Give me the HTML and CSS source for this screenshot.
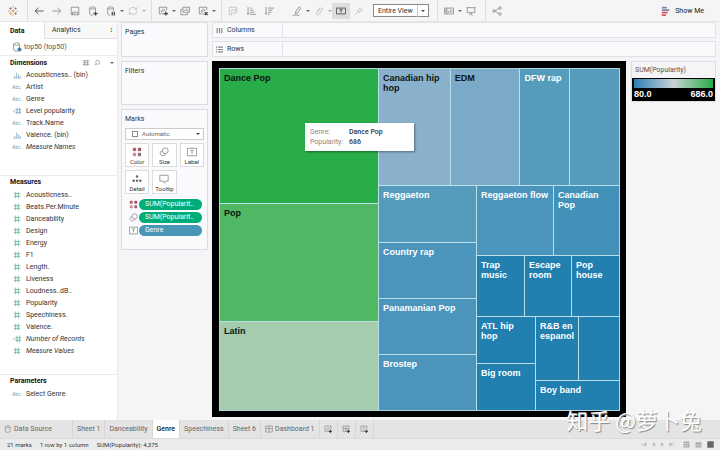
FILE: index.html
```html
<!DOCTYPE html>
<html lang="en">
<head>
    <meta charset="UTF-8">
    <meta name="viewport" content="width=device-width, initial-scale=1.0">
    <title>Genre</title>
    <link rel="stylesheet" href="styles.css">
</head>
<body>
    <!-- Shared icons -->
    <svg class="icon-defs" aria-hidden="true">
        <symbol id="i-num" viewBox="0 0 12 12"><path d="M4 1v10M8 1v10M1 4h10M1 8h10"/></symbol>
        <symbol id="i-numcalc" viewBox="0 0 12 12"><path d="M6 1v10M10 1v10M3.500 4H12M3.500 8H12M0 6h3"/></symbol>
        <symbol id="i-bin" viewBox="0 0 12 12"><path d="M2.500 10V7M5.500 10V2.500M8.500 10V5M11 10V8M1 10.500h11"/></symbol>
        <symbol id="i-dots" viewBox="0 0 12 12"><g stroke="none"><rect x="1" y="1" width="4" height="4" rx="1" fill="#b5606a"/><rect x="7" y="1" width="4" height="4" rx="1" fill="#a05a62"/><rect x="1" y="7" width="4" height="4" rx="1" fill="#cf8a8f"/><rect x="7" y="7" width="4" height="4" rx="1" fill="#8d6f7d"/></g></symbol>
        <symbol id="i-size" viewBox="0 0 12 12"><circle cx="7.500" cy="4.500" r="3.500"/><path d="M4 4.500A3 3 0 1 0 6 10c1 0 2-1 2-2"/></symbol>
        <symbol id="i-label" viewBox="0 0 12 12"><path d="M.5 1.500h11v9H.5zM4 4h4M6 4v4.500"/></symbol>
        <symbol id="i-sheet" viewBox="0 0 12 12"><path d="M10.500 6V1.500h-9v8H7M4 7.500V6M6 7.500V3.500M8 6V5"/><path d="M9.500 7v5M7 9.500h5" stroke="#333" stroke-width="1.500"/></symbol>
        <symbol id="i-grid" viewBox="0 0 12 12"><path d="M1 1.500h10v9H1zM1 5.500h10M6 1.500v9"/></symbol>
        <symbol id="i-gridadd" viewBox="0 0 12 12"><path d="M10.500 6V1.500h-9v8H7M1.500 5.500h9M6 1.500v8"/><path d="M9.500 7v5M7 9.500h5" stroke="#333" stroke-width="1.500"/></symbol>
        <symbol id="i-bookadd" viewBox="0 0 12 12"><path d="M10.500 6V1.500H7L6 2.500 5 1.500H1.500v8H5L6 10.500M6 2.500v8"/><path d="M9.500 7v5M7 9.500h5" stroke="#333" stroke-width="1.500"/></symbol>
        <symbol id="i-db" viewBox="0 0 12 12"><path d="M2 2.500v7c0 2 7 2 7 0v-7M2 2.500c0-2 7-2 7 0s-7 2-7 0"/></symbol>
    </svg>

    <header class="toolbar">
        <button class="tool" aria-label="Start page"><svg viewBox="0 0 12 12"><path stroke="#d98a4c" d="M6 4v4M4 6h4"/><path stroke="#b4626e" d="M3 1.500v3M1.500 3h3M9 7.500v3M7.500 9h3"/><path stroke="#7f8fb0" d="M9 1.500v3M7.500 3h3M6 0v2M0 6h2"/><path stroke="#c9a24d" d="M3 7.500v3M1.500 9h3M6 10v2M10 6h2"/></svg></button>
        <span class="divider"></span>
        <button class="tool" aria-label="Undo"><svg viewBox="0 0 12 12"><path class="dark" d="M11.500 6H1.500M5.500 2l-4 4 4 4"/></svg></button>
        <button class="tool" aria-label="Redo"><svg viewBox="0 0 12 12"><path d="M.5 6h10M6.500 2l4 4-4 4"/></svg></button>
        <button class="tool" aria-label="Save"><svg viewBox="0 0 12 12"><path d="M1.500 1.500h9v9h-9zM3 7.500h6v3M3 7.500v3M5 8.500v2"/></svg></button>
        <button class="tool" aria-label="New data source"><svg viewBox="0 0 12 12"><path d="M9 6V2.500c0-2-7-2-7 0v7c0 1 2 1.500 4 1.500M2 2.500c0 1.500 7 1.500 7 0"/><path class="dark" stroke-width="1.500" d="M9 6.500v5M6.500 9h5"/></svg></button>
        <button class="tool" aria-label="Pause updates"><svg viewBox="0 0 12 12"><path d="M9 6V2.500c0-2-7-2-7 0v7c0 1 2 1.500 3 1.500M2 2.500c0 1.500 7 1.500 7 0"/><path class="dark" stroke-width="1.500" d="M7.500 7v4.500M10 7v4.500"/></svg></button>
        <span class="caret"></span>
        <button class="tool faded" aria-label="Refresh"><svg viewBox="0 0 12 12"><path d="M1.500 6a4.500 4.500 0 0 1 8.500-2M10.500 6A4.500 4.500 0 0 1 2 8M10.500 1.500V4H8M1.500 10.500V8H4"/></svg></button>
        <span class="caret faded"></span>
        <span class="divider"></span>
        <button class="tool" aria-label="New worksheet"><svg viewBox="0 0 12 12"><path d="M10.500 5V1.500h-9v8H7M4 7.500V5M6 7.500V3M8 6V4"/><path class="dark" stroke-width="1.500" d="M9.500 6.500v5M7 9h5"/></svg></button>
        <span class="caret"></span>
        <button class="tool" aria-label="Duplicate"><svg viewBox="0 0 12 12"><path d="M3.500 1.500h8v6h-8zM3 4H1v6.500h8V8M5.500 6V5M7.500 6V3M9.500 6V4"/></svg></button>
        <button class="tool" aria-label="Clear sheet"><svg viewBox="0 0 12 12"><path d="M10.500 5V1.500h-9v8H7M4 7.500V5M6 7.500V3M8 6V4"/><path class="dark" stroke-width="1.500" d="M8 7.500l3.500 3.500M11.500 7.500L8 11"/></svg></button>
        <span class="caret"></span>
        <span class="divider"></span>
        <button class="tool faded" aria-label="Swap rows and columns"><svg viewBox="0 0 12 12"><path d="M1.500 10.500v-9h9v3h-6v6zM6 9c3 0 4-1 4-3.500M8.500 7L10 5.500 11.500 7"/></svg></button>
        <button class="tool" aria-label="Sort ascending"><svg viewBox="0 0 12 12"><path d="M2.500 1v9M1 8.500L2.500 10 4 8.500M5 2.500h2M5 5h4M5 7.500h5M5 10h7"/></svg></button>
        <button class="tool" aria-label="Sort descending"><svg viewBox="0 0 12 12"><path d="M2.500 1v9M1 8.500L2.500 10 4 8.500M5 2.500h7M5 5h5M5 7.500h4M5 10h2"/></svg></button>
        <span class="spacer"></span>
        <button class="tool" aria-label="Highlight"><svg viewBox="0 0 12 12"><path d="M8.500 1l2 1.500-4 6-2.500.5.500-2.500zM1 11h8"/></svg></button>
        <span class="caret"></span>
        <button class="tool faded" aria-label="Group members"><svg viewBox="0 0 12 12"><path d="M4 8l4-5c1-1.500 3 0 2 1.500L6 10c-2 2-4 0-3-2l4-6"/></svg></button>
        <span class="caret faded"></span>
        <button class="tool pressed" aria-label="Show mark labels"><svg viewBox="0 0 12 12"><path class="dark" d="M.5 2.500h11v7H.5zM4 4.500h4M6 4.500V8"/></svg></button>
        <button class="tool faded" aria-label="Fix axes"><svg viewBox="0 0 12 12"><path d="M7 2l3 3-2 .5L6.500 8 4 5.500 6.500 4zM5 7l-3 3"/></svg></button>
        <span class="fit drop"><select aria-label="Fit"><option>Entire View</option></select></span>
        <span class="divider"></span>
        <button class="tool" aria-label="Show or hide cards"><svg viewBox="0 0 12 12"><path d="M.5 2.500h11v7H.5zM3.500 2.500v7M.5 5h3M.5 7h3M5.500 8V6M7.500 8V4M9.500 8V5"/></svg></button>
        <span class="caret"></span>
        <button class="tool" aria-label="Presentation mode"><svg viewBox="0 0 12 12"><path d="M.5 2h11M1.500 2v6h9V2M6 8v2M4 11l2-1.500L8 11"/></svg></button>
        <span class="divider"></span>
        <button class="tool" aria-label="Share"><svg viewBox="0 0 12 12"><path d="M4 5.500L8 3M4 6.500L8 9"/><circle cx="2.500" cy="6" r="1.500"/><circle cx="9.500" cy="2.500" r="1.500"/><circle cx="9.500" cy="9.500" r="1.500"/></svg></button>
        <button class="show-me"><svg viewBox="0 0 12 12"><path stroke="#7b86a8" stroke-width="2" d="M1 2h6M1 5h9"/><path stroke="#d9566a" stroke-width="2" d="M1 8h7M1 11h5"/></svg>Show Me</button>
    </header>

    <main class="workspace">
        <aside class="data-pane">
            <div class="pane-tabs">
                <button class="active">Data</button>
                <button class="analytics">Analytics<span>&#8597;</span></button>
            </div>
            <div class="source"><svg viewBox="0 0 12 12"><use href="#i-db"/><circle cx="9" cy="9" r="2.500" fill="#3f87b0" stroke="none"/></svg>top50 (top50)</div>

            <section class="dimensions">
                <h2>Dimensions
                    <span class="head-tools">
                        <svg viewBox="0 0 12 12"><path d="M1 2.500h10M1 5.500h10M1 8.500h10M4 2v8M8 2v8"/></svg>
                        <svg viewBox="0 0 12 12"><circle cx="7" cy="5" r="3"/><path d="M5 7l-3 3"/></svg>
                        <i class="caret"></i>
                    </span>
                </h2>
                <ul class="fields blue">
                    <li><svg><use href="#i-bin"/></svg>Acousticness.. (bin)</li>
                    <li><b>Abc</b>Artist</li>
                    <li><b>Abc</b>Genre</li>
                    <li><svg><use href="#i-numcalc"/></svg>Level popularity</li>
                    <li><b>Abc</b>Track.Name</li>
                    <li><svg><use href="#i-bin"/></svg>Valence. (bin)</li>
                    <li><b>Abc</b><em>Measure Names</em></li>
                </ul>
            </section>

            <section class="measures">
                <h2>Measures</h2>
                <ul class="fields green">
                    <li><svg><use href="#i-num"/></svg>Acousticness..</li>
                    <li><svg><use href="#i-num"/></svg>Beats.Per.Minute</li>
                    <li><svg><use href="#i-num"/></svg>Danceability</li>
                    <li><svg><use href="#i-num"/></svg>Design</li>
                    <li><svg><use href="#i-num"/></svg>Energy</li>
                    <li><svg><use href="#i-num"/></svg>F1</li>
                    <li><svg><use href="#i-num"/></svg>Length.</li>
                    <li><svg><use href="#i-num"/></svg>Liveness</li>
                    <li><svg><use href="#i-num"/></svg>Loudness..dB..</li>
                    <li><svg><use href="#i-num"/></svg>Popularity</li>
                    <li><svg><use href="#i-num"/></svg>Speechiness.</li>
                    <li><svg><use href="#i-num"/></svg>Valence.</li>
                    <li><svg><use href="#i-numcalc"/></svg><em>Number of Records</em></li>
                    <li><svg><use href="#i-num"/></svg><em>Measure Values</em></li>
                </ul>
            </section>

            <section class="parameters">
                <h2>Parameters</h2>
                <ul class="fields blue">
                    <li><b>Abc</b>Select Genre</li>
                </ul>
            </section>
        </aside>

        <div class="cards">
            <section class="card pages"><h3>Pages</h3></section>
            <section class="card filters"><h3>Filters</h3></section>
            <section class="card marks">
                <h3>Marks</h3>
                <span class="mark-type drop"><i class="square"></i><select aria-label="Mark type"><option>Automatic</option></select></span>
                <div class="mark-buttons">
                    <button><svg><use href="#i-dots"/></svg>Color</button>
                    <button><svg><use href="#i-size"/></svg>Size</button>
                    <button><svg><use href="#i-label"/></svg>Label</button>
                    <button><svg viewBox="0 0 12 12"><g stroke="none" fill="#666"><circle cx="6" cy="3" r="1.500"/><circle cx="2" cy="8" r="1.500"/><circle cx="6" cy="8" r="1.500"/><circle cx="10" cy="8" r="1.500"/></g></svg>Detail</button>
                    <button><svg viewBox="0 0 12 12"><path d="M1 1.500h10v7H8L6.500 11 5.500 8.500H1z"/></svg>Tooltip</button>
                </div>
                <ul class="pills">
                    <li><svg><use href="#i-dots"/></svg><span class="pill green">SUM(Popularit..</span></li>
                    <li><svg><use href="#i-size"/></svg><span class="pill green">SUM(Popularit..</span></li>
                    <li><svg><use href="#i-label"/></svg><span class="pill blue">Genre</span></li>
                </ul>
            </section>
        </div>

        <div class="sheet">
            <div class="shelf"><span><svg viewBox="0 0 12 12"><path stroke-width="2" d="M2 1.500v9M6 1.500v9M10 1.500v9"/></svg>Columns</span></div>
            <div class="shelf"><span><svg viewBox="0 0 12 12"><path stroke-width="2" d="M3.500 2H12M3.500 6H12M3.500 10H12M0 2h2M0 6h2M0 10h2"/></svg>Rows</span></div>

            <div class="view">
                <!-- flex-grow is each mark's share of the treemap -->
                <div class="chart">
                    <div class="treemap row">
                        <div class="col" style="flex-grow: 158">
                            <div class="mark dance-pop" style="flex-grow: 134"><span>Dance Pop</span>
                                <dl class="tooltip">
                                    <dt>Genre:</dt><dd>Dance Pop</dd>
                                    <dt>Popularity:</dt><dd>686</dd>
                                </dl>
                            </div>
                            <div class="mark pop" style="flex-grow: 117"><span>Pop</span></div>
                            <div class="mark latin" style="flex-grow: 88"><span>Latin</span></div>
                        </div>
                        <div class="col" style="flex-grow: 240">
                            <div class="row" style="flex-grow: 116">
                                <div class="mark can-hip-hop" style="flex-grow: 71"><span>Canadian hip hop</span></div>
                                <div class="mark edm" style="flex-grow: 69"><span>EDM</span></div>
                                <div class="mark s4" style="flex-grow: 49"><span>DFW rap</span></div>
                                <div class="mark s4" style="flex-grow: 49"></div>
                            </div>
                            <div class="row" style="flex-grow: 225">
                                <div class="col" style="flex-grow: 97">
                                    <div class="mark s4" style="flex-grow: 56"><span>Reggaeton</span></div>
                                    <div class="mark s3" style="flex-grow: 55"><span>Country rap</span></div>
                                    <div class="mark s3" style="flex-grow: 55"><span>Panamanian Pop</span></div>
                                    <div class="mark s3" style="flex-grow: 55"><span>Brostep</span></div>
                                </div>
                                <div class="col" style="flex-grow: 142">
                                    <div class="row" style="flex-grow: 70">
                                        <div class="mark s3" style="flex-grow: 76"><span>Reggaeton flow</span></div>
                                        <div class="mark s2" style="flex-grow: 65"><span>Canadian Pop</span></div>
                                    </div>
                                    <div class="row" style="flex-grow: 60">
                                        <div class="mark s1" style="flex-grow: 47"><span>Trap music</span></div>
                                        <div class="mark s1" style="flex-grow: 46"><span>Escape room</span></div>
                                        <div class="mark s1" style="flex-grow: 47"><span>Pop house</span></div>
                                    </div>
                                    <div class="row" style="flex-grow: 93">
                                        <div class="col" style="flex-grow: 58">
                                            <div class="mark s1" style="flex-grow: 46"><span>ATL hip hop</span></div>
                                            <div class="mark s1" style="flex-grow: 46"><span>Big room</span></div>
                                        </div>
                                        <div class="col" style="flex-grow: 83">
                                            <div class="row" style="flex-grow: 63">
                                                <div class="mark s1" style="flex-grow: 42"><span>R&amp;B en espanol</span></div>
                                                <div class="mark s1" style="flex-grow: 40"></div>
                                            </div>
                                            <div class="mark s1" style="flex-grow: 29"><span>Boy band</span></div>
                                        </div>
                                    </div>
                                </div>
                            </div>
                        </div>
                    </div>
                </div>
                <aside class="legend">
                    <h3>SUM(Popularity)</h3>
                    <div class="scale">
                        <div class="ramp"></div>
                        <span>80.0</span><span>686.0</span>
                    </div>
                </aside>
            </div>
        </div>
    </main>

    <footer>
        <nav class="sheet-tabs">
            <button class="data-source"><svg><use href="#i-db"/></svg>Data Source</button>
            <button>Sheet 1</button>
            <button>Danceability</button>
            <button class="active">Genre</button>
            <button>Speechiness</button>
            <button>Sheet 6</button>
            <button><svg><use href="#i-grid"/></svg>Dashboard 1</button>
            <button class="add" aria-label="New worksheet"><svg><use href="#i-sheet"/></svg></button>
            <button class="add" aria-label="New dashboard"><svg><use href="#i-gridadd"/></svg></button>
            <button class="add" aria-label="New story"><svg><use href="#i-bookadd"/></svg></button>
        </nav>
        <div class="status">
            <span>21 marks</span><span>1 row by 1 column</span><span>SUM(Popularity): 4,375</span>
            <div class="pager">
                <button aria-label="First"><svg viewBox="0 0 12 12"><path fill="#bbb" stroke="#bbb" d="M2 3v6M9 3L4 6l5 3z"/></svg></button>
                <button aria-label="Previous"><svg viewBox="0 0 12 12"><path fill="#bbb" stroke="#bbb" d="M8 3L4 6l4 3z"/></svg></button>
                <button aria-label="Next"><svg viewBox="0 0 12 12"><path fill="#bbb" stroke="#bbb" d="M4 3l4 3-4 3z"/></svg></button>
                <button aria-label="Last"><svg viewBox="0 0 12 12"><path fill="#bbb" stroke="#bbb" d="M10 3v6M3 3l5 3-5 3z"/></svg></button>
            </div>
            <div class="layouts">
                <button aria-label="Tabs"><svg viewBox="0 0 12 12"><path stroke="#aaa" stroke-width="2" d="M1 2h10M1 6h10M1 10h10M2 1v10M6 1v10M10 1v10"/></svg></button>
                <button aria-label="Filmstrip"><svg viewBox="0 0 12 12"><path stroke="#aaa" stroke-width="2" d="M1 3h10M1 5h10M1 10h10M2 2v9M6 2v9M10 2v9"/></svg></button>
                <button aria-label="Sheet sorter"><svg viewBox="0 0 12 12"><path fill="#666" stroke="#666" d="M1 1h10v10H1z"/></svg></button>
            </div>
        </div>
    </footer>

    <div class="watermark" lang="zh">知乎 @萝卜兔</div>
</body>
</html>
```
FILE: styles.css
```css
* {
    box-sizing: border-box;
}

body {
    position: relative;
    display: flex;
    flex-direction: column;
    min-height: 100vh;
    margin: 0;
    background-color: #f5f4f7;
    color: #333;
    font-family: Roboto, "Liberation Sans", sans-serif;
    font-size: 7px;
    line-height: 12px;
}

h2, h3, ul, dl, dd {
    margin: 0;
    padding: 0;
    list-style: none;
}

button, select {
    margin: 0;
    padding: 0;
    border: none;
    background: none;
    color: inherit;
    font: inherit;
    cursor: pointer;
}

svg {
    flex: none;
    width: 10px;
    height: 10px;
    fill: none;
    stroke: #888;
    stroke-width: 1;
}

.icon-defs {
    display: none;
}

/* Toolbar */
.toolbar {
    display: flex;
    align-items: center;
    height: 22px;
    padding: 0 16px 0 4px;
    background-color: #f5f5f5;
    border-bottom: 1px solid #e6e6e6;
}

.tool {
    display: flex;
    justify-content: center;
    align-items: center;
    width: 18px;
    height: 16px;
}

.tool.pressed {
    background-color: #dedede;
}

.tool .dark {
    stroke: #444;
}

.faded {
    opacity: 0.5;
}

.divider {
    width: 1px;
    height: 22px;
    margin: 0 2px 0 5px;
    background-color: #dedede;
}

.spacer {
    width: 10px;
}

.caret {
    width: 4px;
    border: 2px solid transparent;
    border-top-color: #666;
    border-bottom: none;
}

.drop {
    position: relative;
    display: flex;
    align-items: center;
    border: 1px solid #ccc;
    background-color: #fff;
}

.drop select {
    flex: 1;
    appearance: none;
    outline: none;
}

.drop::after {
    content: "";
    position: absolute;
    right: 3px;
    border: 2px solid transparent;
    border-top-color: #444;
    border-bottom: none;
}

.fit {
    width: 56px;
    height: 13px;
    margin: 0 3px 0 5px;
    padding-left: 4px;
    border-color: #888;
}

.fit select {
    border-right: 1px solid #ccc;
    margin-right: 10px;
}

.show-me {
    display: flex;
    align-items: center;
    gap: 4px;
    margin-left: auto;
    color: #222;
}

/* Data pane */
.workspace {
    flex: 1;
    display: flex;
}

.data-pane {
    display: flex;
    flex-direction: column;
    width: 118px;
    background-color: #fff;
    border-right: 1px solid #e8e8e8;
}

.pane-tabs {
    display: flex;
    height: 17px;
}

.pane-tabs button {
    flex: 1;
    padding: 0 4px 0 7px;
    border-left: 1px solid #e2e2e2;
    border-bottom: 1px solid #e2e2e2;
    background-color: #f8f8f8;
    text-align: left;
}

.pane-tabs .active {
    flex: none;
    width: 44px;
    padding-left: 10px;
    border: none;
    background-color: #fff;
    color: #111;
    font-weight: bold;
}

.pane-tabs .analytics {
    display: flex;
    justify-content: space-between;
    align-items: center;
}

.source {
    display: flex;
    align-items: center;
    gap: 2px;
    height: 16px;
    padding-left: 12px;
    color: #555;
}

.data-pane section {
    border-top: 1px solid #ececec;
}

.data-pane h2 {
    display: flex;
    align-items: center;
    height: 13px;
    padding: 0 3px 0 10px;
    color: #111;
    font-size: 7px;
    font-weight: bold;
}

.head-tools {
    display: flex;
    align-items: center;
    gap: 3px;
    margin-left: auto;
}

.head-tools svg {
    width: 8px;
    height: 8px;
}

.head-tools .caret {
    margin-left: 6px;
}

.dimensions {
    flex: 120;
}

.measures {
    flex: 200;
}

.parameters {
    flex: 46;
}

.fields li {
    display: flex;
    align-items: center;
    gap: 4px;
    height: 12px;
    padding-left: 12px;
}

.fields b {
    width: 10px;
    color: #6ba0b4;
    font-size: 5px;
    font-weight: normal;
}

.fields svg {
    height: 8px;
}

.fields.blue svg {
    stroke: #5a9cb4;
}

.fields.green svg {
    stroke: #4fa888;
}

/* Cards */
.cards {
    display: flex;
    flex-direction: column;
    gap: 4px;
    width: 94px;
    padding: 0 4px 0 3px;
}

.card {
    border: 1px solid #dcdce0;
    background-color: #fafafc;
}

.card h3 {
    padding: 3px;
    font-size: 7px;
    font-weight: normal;
}

.pages {
    height: 35px;
}

.filters {
    height: 44px;
}

.marks {
    height: 141px;
}

.mark-type {
    height: 12px;
    margin: 0 3px 3px;
    padding-left: 6px;
    gap: 4px;
    color: #666;
    font-size: 6px;
}

.mark-type .square {
    width: 6px;
    height: 6px;
    border: 1px solid #888;
}

.mark-buttons {
    display: grid;
    grid-template-columns: repeat(3, 1fr);
    gap: 3px;
    padding: 0 3px;
}

.mark-buttons button {
    display: flex;
    flex-direction: column;
    align-items: center;
    justify-content: flex-end;
    height: 24px;
    border: 1px solid #dcdce0;
    background-color: #fff;
    font-size: 6px;
    line-height: 9px;
}

.pills {
    display: flex;
    flex-direction: column;
    gap: 2px;
    padding: 5px 5px 0 7px;
}

.pills li {
    display: flex;
    align-items: center;
    gap: 1px;
}

.pills svg {
    width: 9px;
    height: 9px;
}

.pill {
    flex: 1;
    height: 11px;
    padding-left: 6px;
    border-radius: 6px;
    color: #fff;
    line-height: 11px;
}

.pill.green {
    background-color: #00ac78;
}

.pill.blue {
    background-color: #4796b5;
}

/* Shelves and view */
.sheet {
    flex: 1;
    display: flex;
    flex-direction: column;
    gap: 3px;
    padding: 0 4px 3px 0;
}

.shelf {
    height: 16px;
    border: 1px solid #e2e2e6;
    background-color: #fafafc;
}

.shelf span {
    display: flex;
    align-items: center;
    gap: 4px;
    width: 70px;
    height: 100%;
    padding-left: 3px;
    border-right: 1px solid #e2e2e6;
}

.shelf svg {
    width: 7px;
    height: 7px;
}

.view {
    flex: 1;
    display: flex;
    align-items: flex-start;
    gap: 5px;
    padding-top: 1px;
}

.chart {
    flex: 1;
    align-self: stretch;
    display: flex;
    padding: 7px 6px 6px 7px;
    background-color: #000;
}

.row, .col {
    display: flex;
    flex-basis: 0;
    gap: 1px;
    min-width: 0;
    min-height: 0;
}

.col {
    flex-direction: column;
}

.treemap {
    flex: 1;
    border: 1px solid #b5d3dc;
    background-color: #b9e0ea;
}

.mark {
    position: relative;
    flex-basis: 0;
    min-width: 0;
    min-height: 0;
    color: #fff;
    font: bold 9px/10px "Liberation Sans", Arial, sans-serif;
}

.mark > span {
    display: block;
    padding: 4px 3px 0 4px;
}

.dance-pop, .pop, .latin, .can-hip-hop, .edm {
    color: #0c1512;
}

.dance-pop { background-color: #29ad49; }
.pop { background-color: #50b865; }
.latin { background-color: #a4ccad; }
.can-hip-hop { background-color: #8ab1cb; }
.edm { background-color: #7aaac8; }

/* Blue steps, strongest first */
.s1 { background-color: #2180b0; }
.s2 { background-color: #4291b9; }
.s3 { background-color: #4b95bd; }
.s4 { background-color: #559cbc; }

.tooltip {
    position: absolute;
    z-index: 1;
    top: 54px;
    left: 85px;
    display: grid;
    grid-template-columns: 39px 1fr;
    width: 109px;
    padding: 4px 5px;
    background-color: #fff;
    box-shadow: 1px 1px 2px rgba(0, 0, 0, 0.4);
    color: #333;
    font: 7px/10px Roboto, sans-serif;
}

.tooltip dt {
    color: #888;
}

.tooltip dd {
    font-weight: 500;
}

/* Legend */
.legend {
    width: 85px;
    border: 1px solid #dedee2;
}

.legend h3 {
    padding: 2px 3px;
    color: #555;
    font-size: 7px;
    font-weight: normal;
}

.scale {
    display: flex;
    flex-wrap: wrap;
    justify-content: space-between;
    padding: 1px 2px;
    background-color: #000;
    color: #fff;
    font: bold 9px/12px "Liberation Sans", Arial, sans-serif;
}

.ramp {
    width: 100%;
    height: 9px;
    background: linear-gradient(to right, #2a80b2, #c9d2d5 50%, #28ad49);
}

/* Sheet tabs and status bar */
.sheet-tabs {
    display: flex;
    height: 18px;
    background-color: #e4e4e5;
}

.sheet-tabs button {
    display: flex;
    align-items: center;
    gap: 2px;
    padding: 0 4px;
    border-right: 1px solid #d6d6d8;
    color: #666;
}

.sheet-tabs svg {
    width: 8px;
    height: 8px;
}

.sheet-tabs .data-source {
    width: 73px;
}

.sheet-tabs .active {
    background-color: #fff;
    color: #222;
    font-weight: 500;
}

.sheet-tabs .add {
    width: 18px;
}

.status {
    display: flex;
    align-items: center;
    gap: 8px;
    height: 12px;
    padding: 0 6px 0 7px;
    background-color: #ebebec;
    border-top: 1px solid #dcdcde;
    font-size: 6px;
    line-height: 11px;
}

.pager, .layouts {
    display: flex;
    align-items: center;
    gap: 2px;
}

.pager {
    margin-left: auto;
}

.layouts {
    gap: 5px;
}

.pager button, .layouts button {
    display: flex;
}

.status svg {
    width: 7px;
    height: 7px;
}

.watermark {
    position: absolute;
    right: 18px;
    bottom: 19px;
    color: #fff;
    font: 22px/24px "Noto Sans CJK SC", sans-serif;
    text-shadow: 1px 1px 1px #888;
    pointer-events: none;
}
```
